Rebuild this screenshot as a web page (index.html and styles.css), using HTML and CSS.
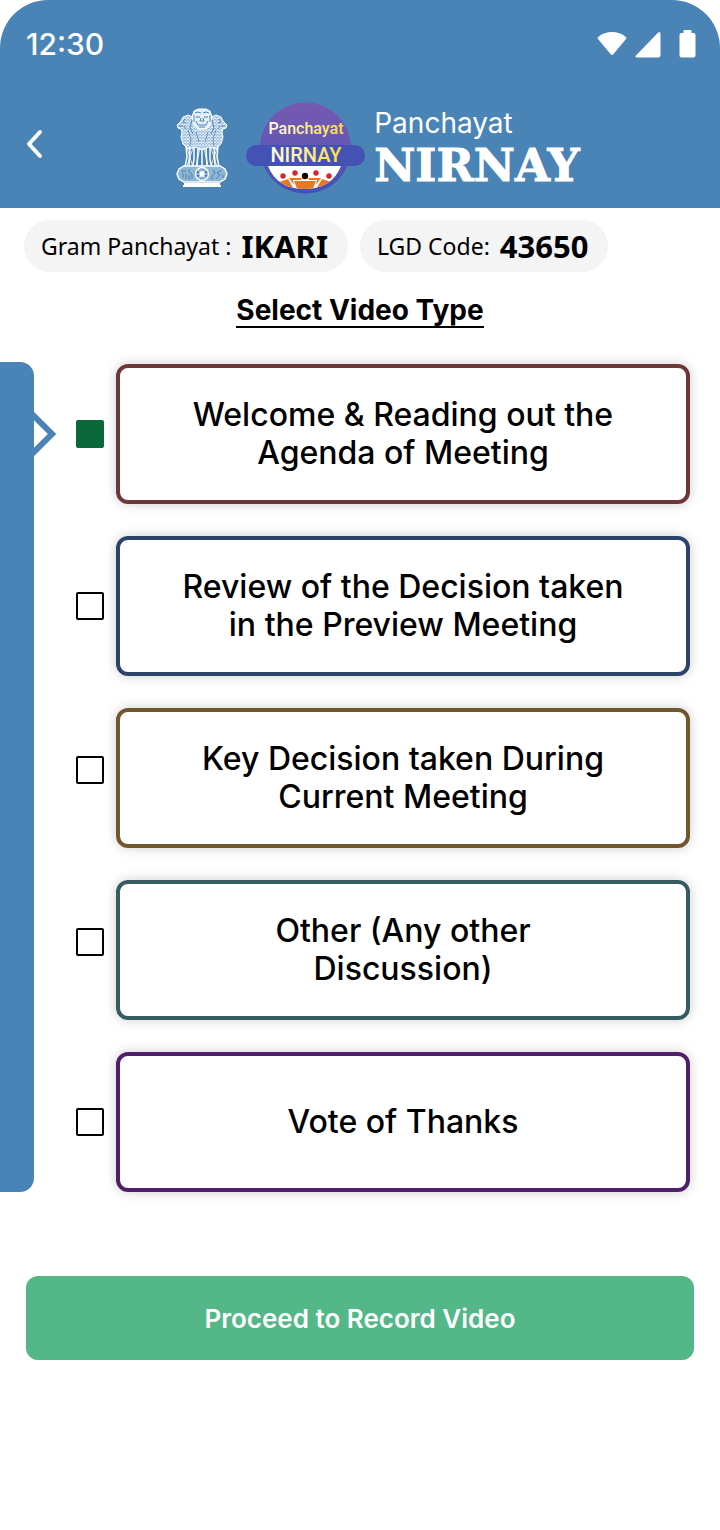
FILE: index.html
```html
<!DOCTYPE html>
<html lang="en">
<head>
    <meta charset="UTF-8">
    <meta name="viewport" content="width=device-width, initial-scale=1.0">
    <title>Panchayat NIRNAY</title>
    <link rel="stylesheet" href="styles.css">
</head>
<body>
    <header class="app-header">
        <div class="status-bar">
            <span class="time">12:30</span>
            <div class="status-icons">
                <svg width="30" height="28" viewBox="0 0 30 28" fill="#fff"><path d="M1.4 9.500Q-.2 8 1.500 6.700Q7.300 2.100 15 2.100T28.500 6.700Q30.200 8 28.600 9.500L16.500 24Q15 25.800 13.500 24Z"/></svg>
                <svg class="signal" width="26" height="28" viewBox="0 0 26 28" fill="#fff"><path d="M22.500 3.200Q25.500 .6 25.500 4V25Q25.500 27.500 23 27.500H2Q-.8 27.500 1.200 25.200Z"/></svg>
                <svg width="17" height="28" viewBox="0 0 17 28" fill="#fff"><path d="M5.500 0H11.500Q12.500 0 12.500 1V3H14.500Q16.500 3 16.500 5V25.500Q16.500 27.500 14.500 27.500H2.500Q.5 27.500 .5 25.500V5Q.5 3 2.500 3H4.500V1Q4.500 0 5.500 0Z"/></svg>
            </div>
        </div>
        <div class="nav-bar">
            <button class="back-button" type="button" aria-label="Back">
                <svg width="18" height="30" viewBox="0 0 18 30" fill="none" stroke="#fff" stroke-width="4" stroke-linecap="round" stroke-linejoin="round"><path d="M14 3L3 15L14 27"/></svg>
            </button>
            <div class="brand">
                <!-- Lion capital -->
                <svg class="emblem" width="52" height="80" viewBox="0 0 52 80">
                    <defs>
                        <pattern id="mane" width="3" height="3" patternUnits="userSpaceOnUse">
                            <rect width="3" height="3" fill="#f2f8fd"/>
                            <path d="M0 1.500L1.500 0L3 1.500M0 3L1.500 1.800L3 3" fill="none" stroke="#4a83b5" stroke-width=".55"/>
                        </pattern>
                    </defs>
                    <g stroke="#fff" stroke-width="1" stroke-linejoin="round">
                        <path fill="url(#mane)" d="M17 9L12 7L7 9L5 13L1 17L2 20L5 21L6 24L5 29L7 36L12 41L19 39L26 42L33 39L40 41L45 36L47 29L46 24L47 21L50 20L51 17L47 13L45 9L40 7L35 9Z"/>
                        <path fill="#e4eff8" d="M18 3L22 1H30L34 3L36 9L34 17L30 21H22L18 17L16 9Z"/>
                    </g>
                    <g fill="none" stroke="#4a83b5" stroke-width="1">
                        <path d="M19 5Q22 3 25 5M27 5Q30 3 33 5M20 9H24M28 9H32M25 10L24 13H28L27 10M20 13L22 17H30L32 13M23 19H29M18 7V14M34 7V14"/>
                        <path d="M9 11L7 14L10 15M3 18H7M8 18L10 21M43 11L45 14L42 15M49 18H45M44 18L42 21M16 12L14 20L17 26M36 12L38 20L35 26"/>
                        <path d="M12 22L15 31L14 38M40 22L37 31L38 38M20 24L23 34M32 24L29 34" stroke-width=".8"/>
                    </g>
                    <g fill="none" stroke="#fff" stroke-width="1.500">
                        <path d="M10 38L11 49L9 59M14 39L13 57M18 39L18 52L16 60M22 40L21 60M26 41V60M30 40L31 60M34 39L34 52L36 60M38 39L39 57M42 38L41 49L43 59"/>
                        <path stroke-width=".8" d="M11 40L17 59M17 40L11 58M24 40L20 58M28 40L32 58M35 40L41 59M41 40L35 58"/>
                        <path d="M8 58H44L49 61L51 66L49 71L44 74H8L3 71L1 66L3 61Z" stroke-width="1.400" fill="#8fb5d5"/>
                    </g>
                    <g fill="none" stroke="#fff" stroke-width="1.400">
                        <circle cx="26" cy="66" r="6.500" fill="#4a83b5"/>
                        <circle cx="26" cy="66" r="2" fill="#fff"/>
                        <path stroke-width=".7" d="M19 66H33M26 59V73M21 61L31 71M31 61L21 71M23 60L29 72M29 60L23 72"/>
                    </g>
                    <g fill="none" stroke="#4a83b5" stroke-width="1">
                        <path d="M5 63H10M7 65V70M10 66V71M13 61V64L16 66V71M13 67V72M46 62L41 65L44 67L40 71M37 62L39 65L36 68V72M47 67V70"/>
                    </g>
                    <path d="M8 76H44M7 78H45" fill="none" stroke="#fff" stroke-width="2"/>
                </svg>
                <!-- Round app logo -->
                <svg class="app-logo" width="120" height="94" viewBox="0 0 120 94">
                    <defs>
                        <linearGradient id="disc" x1="0" y1="0" x2="0" y2="1">
                            <stop offset="0" stop-color="#7659b2"/>
                            <stop offset=".5" stop-color="#6357b4"/>
                            <stop offset="1" stop-color="#3f51b5"/>
                        </linearGradient>
                        <linearGradient id="gold" x1="0" y1="0" x2="1" y2="0">
                            <stop offset="0" stop-color="#fffbe8"/>
                            <stop offset="1" stop-color="#fbdc3f"/>
                        </linearGradient>
                        <clipPath id="bowl"><path d="M22 65H95Q86 88 58.500 88T22 65Z"/></clipPath>
                    </defs>
                    <circle cx="59.500" cy="47" r="45.500" fill="url(#disc)"/>
                    <g clip-path="url(#bowl)">
                        <rect x="20" y="60" width="80" height="30" fill="#fff"/>
                        <path fill="#e87722" d="M30 82L42 78L49 90H34ZM43 77H56L55 79H47L48 84ZM62 77H75L70 84L71 79H63ZM48 80H70L66 90H52ZM76 78L88 82L84 90H69Z"/>
                    </g>
                    <g fill="#d22630">
                        <circle cx="37" cy="75" r="2.700"/><circle cx="49" cy="72" r="2.700"/><circle cx="70" cy="72" r="2.700"/><circle cx="83" cy="75" r="2.700"/>
                    </g>
                    <circle cx="59" cy="75" r="3.200" fill="#080808"/>
                    <rect x="0" y="44" width="119" height="21" rx="10.500" fill="#4453b3"/>
                    <g fill="url(#gold)" text-anchor="middle">
                        <text class="logo-small" x="60" y="33">Panchayat</text>
                        <text class="logo-large" x="60" y="61">NIRNAY</text>
                    </g>
                </svg>
                <div class="brand-name">
                    <span class="brand-top">Panchayat</span>
                    <span class="brand-bottom">NIRNAY</span>
                </div>
            </div>
        </div>
    </header>

    <section class="info-chips">
        <div class="chip"><span>Gram Panchayat :</span><strong>IKARI</strong></div>
        <div class="chip"><span>LGD Code:</span><strong>43650</strong></div>
    </section>

    <h1>Select Video Type</h1>

    <main class="video-types">
        <aside class="side-panel">
            <svg class="side-arrow" width="24" height="48" viewBox="0 0 24 48" fill="none" stroke="#4a83b5" stroke-width="6"><path d="M-2 4L18 24L-2 44"/></svg>
        </aside>
        <div class="type-list">
            <label class="type-row">
                <input type="checkbox" checked>
                <span class="type-card red">Welcome &amp; Reading out the Agenda of Meeting</span>
            </label>
            <label class="type-row">
                <input type="checkbox">
                <span class="type-card blue">Review of the Decision taken in the Preview Meeting</span>
            </label>
            <label class="type-row raised">
                <input type="checkbox">
                <span class="type-card brown">Key Decision taken During Current Meeting</span>
            </label>
            <label class="type-row raised">
                <input type="checkbox">
                <span class="type-card teal">Other (Any other<br>Discussion)</span>
            </label>
            <label class="type-row">
                <input type="checkbox">
                <span class="type-card purple">Vote of Thanks</span>
            </label>
        </div>
    </main>

    <footer class="actions">
        <button class="proceed-button" type="button">Proceed to Record Video</button>
    </footer>
</body>
</html>
```

FILE: styles.css
```css
* {
    box-sizing: border-box;
}
body {
    margin: 0;
    font-family: Inter, sans-serif;
    background-color: #fff;
    color: #000;
}

/* Header */
.app-header {
    height: 208px;
    background-color: #4a83b5;
    color: #fff;
    border-radius: 48px 48px 0 0;
}
.status-bar {
    display: flex;
    justify-content: space-between;
    align-items: center;
    height: 88px;
    padding: 0 24px 0 26px;
}
.time {
    font-size: 30px;
    font-weight: 500;
}
.status-icons {
    display: flex;
    align-items: center;
    gap: 8px;
}
.signal {
    margin-right: 10px;
}
.nav-bar {
    display: flex;
    align-items: center;
    height: 112px;
    padding: 0 26px;
}
.back-button {
    display: flex;
    width: 38px;
    padding: 0;
    border: none;
    background: none;
    cursor: pointer;
}
.brand {
    flex: 1;
    display: flex;
    justify-content: center;
    align-items: center;
    padding: 8px 2px 0 0;
}
.app-logo {
    margin: 0 8px 0 18px;
    font-family: Roboto, sans-serif;
    font-weight: 500;
}
.logo-small {
    font-size: 16px;
}
.logo-large {
    font-size: 20px;
}
.brand-name {
    display: flex;
    flex-direction: column;
    padding-top: 2px;
}
.brand-top {
    font-size: 28px;
    line-height: 34px;
}
.brand-bottom {
    font-family: "DejaVu Serif", serif;
    font-size: 45px;
    font-weight: bold;
    line-height: 52px;
    -webkit-text-stroke: 1px #fff;
}

/* Panchayat details */
.info-chips {
    display: flex;
    gap: 12px;
    padding: 12px 24px 0;
}
.chip {
    display: flex;
    align-items: center;
    justify-content: space-between;
    gap: 10px;
    height: 52px;
    padding: 0 20px 0 17px;
    border-radius: 26px;
    background-color: #f4f4f4;
    font-family: "Noto Sans", sans-serif;
    font-size: 23px;
}
.chip strong {
    font-size: 31px;
}
h1 {
    width: fit-content;
    margin: 22px auto 34px;
    border-bottom: 2px solid #000;
    font-size: 28px;
    font-weight: 700;
    line-height: 32px;
}

/* Video type list */
.video-types {
    display: flex;
    padding-right: 30px;
}
.side-panel {
    position: relative;
    width: 34px;
    border-radius: 0 14px 14px 0;
    background-color: #4a83b5;
}
.side-arrow {
    position: absolute;
    top: 48px;
    left: 100%;
}
.type-list {
    flex: 1;
    display: flex;
    flex-direction: column;
    gap: 32px;
    padding: 2px 0 0 42px;
}
.type-row {
    display: flex;
    align-items: center;
    gap: 12px;
    cursor: pointer;
}
.type-row input {
    appearance: none;
    width: 28px;
    height: 28px;
    margin: 0;
    border: 2px solid #000;
    border-radius: 2px;
    cursor: pointer;
}
.type-row input:checked {
    border-color: #0a683b;
    background-color: #0a683b;
}
.raised input {
    margin-bottom: 16px;
}
.type-card {
    flex: 1;
    display: flex;
    align-items: center;
    justify-content: center;
    min-height: 140px;
    padding: 0 56px;
    border: 4px solid #000;
    border-radius: 12px;
    box-shadow: 0 0 12px rgba(0, 0, 0, 0.2);
    font-size: 32px;
    font-weight: 500;
    line-height: 38px;
    text-align: center;
}
.red {
    border-color: #6e3638;
}
.blue {
    border-color: #2e4369;
}
.brown {
    border-color: #71572e;
}
.teal {
    border-color: #365c61;
}
.purple {
    border-color: #4f2069;
}

/* Bottom action */
.actions {
    padding: 84px 26px 32px;
}
.proceed-button {
    width: 100%;
    height: 84px;
    border: none;
    border-radius: 12px;
    background-color: #53b788;
    color: #fff;
    font-family: inherit;
    font-size: 26px;
    font-weight: 600;
    cursor: pointer;
}
```
